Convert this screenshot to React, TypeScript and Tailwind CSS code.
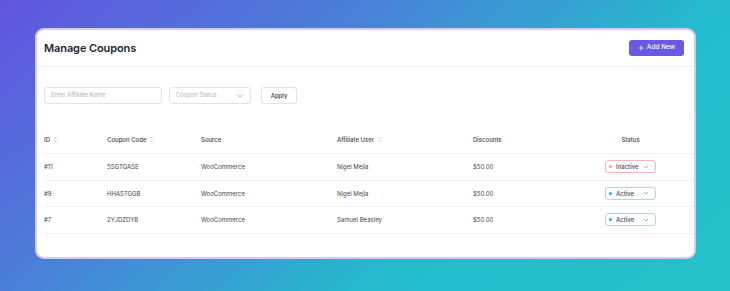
import React from "react";

const font = { fontFamily: "Inter, 'Noto Sans', sans-serif" };

function Sort() {
  return (
    <svg width="5" height="7" viewBox="0 0 5 7" className="ml-[3px] inline-block">
      <path d="M1 2.5 L2.5 1 L4 2.5" fill="none" stroke="#b8b8b8" strokeWidth="0.7" />
      <path d="M1 4.5 L2.5 6 L4 4.5" fill="none" stroke="#b8b8b8" strokeWidth="0.7" />
    </svg>
  );
}

function Chevron({ color = "#9a9a9a" }: { color?: string }) {
  return (
    <svg width="6" height="4" viewBox="0 0 6 4">
      <path d="M1 1 L3 3 L5 1" fill="none" stroke={color} strokeWidth="0.8" />
    </svg>
  );
}

const rows = [
  { id: "#11", code: "5SQTQASE", user: "Nigel Mejia", status: "Inactive" },
  { id: "#9", code: "HHASTGGB", user: "Nigel Mejia", status: "Active" },
  { id: "#7", code: "2YJDZDYB", user: "Samuel Beasley", status: "Active" },
];

const grid = "grid grid-cols-[63px_94px_136px_136px_103px_108px] items-center";

export default function App() {
  return (
    <div
      style={font}
      className="w-[730px] h-[291px] overflow-hidden bg-[linear-gradient(141deg,#6154df_0%,#4b7ed9_33%,#24bccc_67%,#26c1c8_100%)] pt-[28px] pl-[35px]"
    >
      <div className="w-[661px] h-[231px] rounded-[9px] border-[2px] border-[#d6c8f2] bg-white flex flex-col">
        <div className="h-[37px] flex items-center justify-between pl-[7px] pr-[10px] border-b border-[#f1f1f4]">
          <div className="text-[11px] font-semibold text-[#222633] tracking-[-0.1px]">Manage Coupons</div>
          <div className="h-[16px] w-[55px] rounded-[3px] bg-[#6a5ae2] flex items-center justify-center gap-[3px] text-white text-[6.5px] font-medium">
            <svg width="6" height="6" viewBox="0 0 6 6">
              <path d="M3 0.5 V5.5 M0.5 3 H5.5" stroke="white" strokeWidth="0.7" />
            </svg>
            Add New
          </div>
        </div>
        <div className="flex items-center pl-[7px] pt-[20px]">
          <div className="w-[118px] h-[17px] rounded-[3px] border border-[#e3e3e6] flex items-center pl-[6px] text-[5.8px] text-[#b3b3b8]">
            Enter Affiliate Name
          </div>
          <div className="ml-[7px] w-[82px] h-[17px] rounded-[3px] border border-[#e3e3e6] flex items-center justify-between pl-[6px] pr-[7px] text-[5.8px] text-[#b3b3b8]">
            Coupon Status
            <Chevron />
          </div>
          <div className="ml-[10px] w-[36px] h-[17px] rounded-[3px] border border-[#e3e3e6] flex items-center justify-center text-[6px] font-medium text-[#3e414c]">
            Apply
          </div>
        </div>
        <div className="mt-[21px] pl-[7px]">
          <div className={`${grid} h-[29px] border-b border-[#f0f0f3] text-[6px] font-medium text-[#3e414c]`}>
            <div className="flex items-center">ID<Sort /></div>
            <div className="flex items-center">Coupon Code<Sort /></div>
            <div>Source</div>
            <div className="flex items-center">Affiliate User<Sort /></div>
            <div>Discounts</div>
            <div className="text-center pl-[1px]">Status</div>
          </div>
          {rows.map((r) => {
            const inactive = r.status === "Inactive";
            return (
              <div key={r.id} className={`${grid} h-[26.5px] border-b border-[#f0f0f3] text-[6px] text-[#40434e]`}>
                <div>{r.id}</div>
                <div>{r.code}</div>
                <div>WooCommerce</div>
                <div>{r.user}</div>
                <div>$50.00</div>
                <div className="flex justify-center pl-[1px]">
                  <div
                    className={`w-[51px] h-[13px] rounded-[3px] border flex items-center pl-[3px] pr-[6px] ${
                      inactive ? "border-[#f2b9bd] bg-[#fffafa]" : "border-[#bcd3da] bg-[#fbfdfe]"
                    }`}
                  >
                    <span
                      className={`w-[3px] h-[3px] rounded-full ${inactive ? "bg-[#d6a5ae]" : "bg-[#2aa7df]"}`}
                    />
                    <span className="ml-[4px] text-[6px] font-medium text-[#4a4d58] flex-1">{r.status}</span>
                    <Chevron color="#a0a0a8" />
                  </div>
                </div>
              </div>
            );
          })}
        </div>
      </div>
    </div>
  );
}
